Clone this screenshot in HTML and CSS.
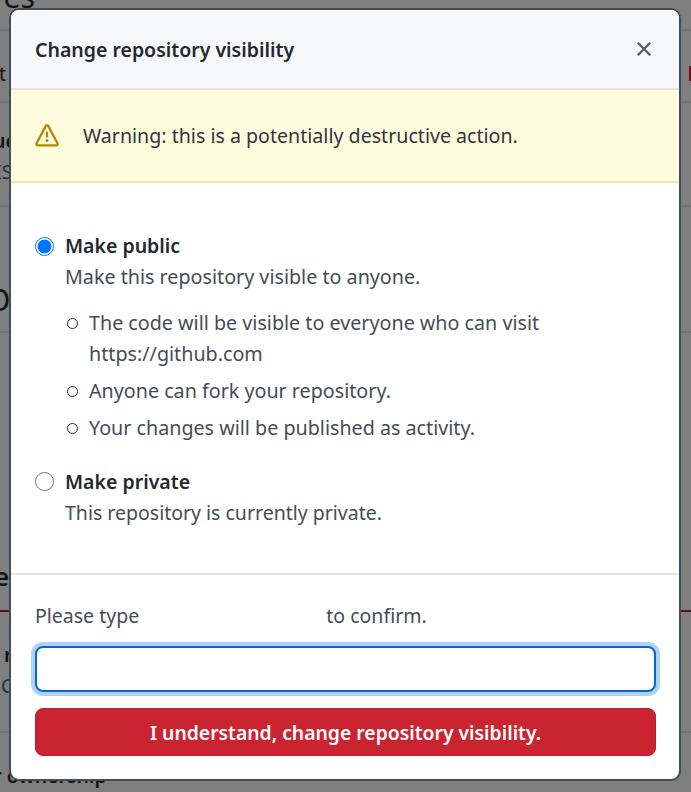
FILE: index.html
```html
<!DOCTYPE html>
<html lang="en">
<head>
    <meta charset="UTF-8">
    <meta name="viewport" content="width=device-width, initial-scale=1.0">
    <title>Change repository visibility</title>
    <link rel="stylesheet" href="styles.css">
</head>
<body>
    <!-- Settings page behind the dialog, only the edges show -->
    <div class="page">
        <div class="row row-heading"><span class="page-heading">Features</span></div>
        <div class="row row-a"><span class="row-text">t</span><span class="row-right"><i class="dots">:</i><i class="red-bar"></i></span></div>
        <div class="row row-b"><span class="row-title">uc</span><span class="row-sub">ES</span></div>
        <div class="row row-c"><span class="page-heading big">O</span></div>
        <div class="row row-d"><span class="row-title">e</span></div>
        <div class="row row-f"><span class="row-title">r</span><span class="row-sub">C</span></div>
        <div class="row row-g"><span class="row-title">Transfer ownership</span></div>
    </div>

    <div class="overlay"></div>

    <div class="modal">
        <header class="modal-header">
            <h1>Change repository visibility</h1>
            <button class="close-btn" aria-label="Close">
                <svg width="24" height="24" viewBox="0 0 16 16" fill="currentColor"><path d="M3.72 3.72a.75.75 0 0 1 1.06 0L8 6.94l3.22-3.22a.749.749 0 0 1 1.275.326.749.749 0 0 1-.215.734L9.06 8l3.22 3.22a.749.749 0 0 1-.326 1.275.749.749 0 0 1-.734-.215L8 9.06l-3.22 3.22a.751.751 0 0 1-1.042-.018.751.751 0 0 1-.018-1.042L6.94 8 3.72 4.78a.75.75 0 0 1 0-1.06Z"/></svg>
            </button>
        </header>

        <div class="flash">
            <svg width="24" height="24" viewBox="0 0 16 16" fill="currentColor"><path d="M6.457 1.047c.659-1.234 2.427-1.234 3.086 0l6.082 11.378A1.75 1.75 0 0 1 14.082 15H1.918a1.75 1.75 0 0 1-1.543-2.575Zm1.763.707a.25.25 0 0 0-.44 0L1.698 13.132a.25.25 0 0 0 .22.368h12.164a.25.25 0 0 0 .22-.368Zm.53 3.996v2.5a.75.75 0 0 1-1.5 0v-2.5a.75.75 0 0 1 1.5 0ZM9 11a1 1 0 1 1-2 0 1 1 0 0 1 2 0Z"/></svg>
            <p>Warning: this is a potentially destructive action.</p>
        </div>

        <div class="options">
            <label class="option">
                <input type="radio" name="visibility" checked>
                <div>
                    <strong>Make public</strong>
                    <p>Make this repository visible to anyone.</p>
                    <ul>
                        <li><span>The code will be visible to everyone who can visit https://github.com</span></li>
                        <li><span>Anyone can fork your repository.</span></li>
                        <li><span>Your changes will be published as activity.</span></li>
                    </ul>
                </div>
            </label>
            <label class="option option-private">
                <input type="radio" name="visibility">
                <div>
                    <strong>Make private</strong>
                    <p>This repository is currently private.</p>
                </div>
            </label>
        </div>

        <div class="confirm">
            <p>Please type <span class="repo-name"></span> to confirm.</p>
            <input type="text" class="confirm-input">
            <button class="danger-btn">I understand, change repository visibility.</button>
        </div>
    </div>
</body>
</html>
```

FILE: styles.css
```css
* {
    margin: 0;
    padding: 0;
    box-sizing: border-box;
}

body {
    font-family: 'Noto Sans', 'Open Sans', sans-serif;
    font-size: 19.5px;
    line-height: 31px;
    color: #24292e;
    background: #fff;
    height: 792px;
    overflow: hidden;
    position: relative;
}

.page {
    display: flex;
    flex-direction: column;
}

.row {
    border-bottom: 2px solid #dfe2e5;
    overflow: hidden;
    display: flex;
    flex-direction: column;
    position: relative;
}

.row-heading {
    height: 31px;
}

.row-a {
    height: 72px;
    padding-top: 27px;
}

.row-b {
    height: 104px;
    padding-top: 22px;
}

.row-c {
    height: 126px;
}

.row-d {
    height: 279px;
    padding-top: 228px;
    border-bottom: 2px solid #9a2a33;
}

.row-f {
    height: 121px;
    padding-top: 27px;
}

.row-g {
    border-bottom: 0;
    height: 60px;
    padding-top: 27px;
}

.page-heading {
    font-size: 30px;
    line-height: 40px;
    margin: -23px 0 0 -87px;
    white-space: nowrap;
}

.page-heading.big {
    margin: 73px 0 0 -13px;
}

.row-text {
    margin-left: -1px;
    color: #24292e;
}

.row-title {
    font-weight: 600;
    margin-left: -7px;
    white-space: nowrap;
}

.row-sub {
    color: #586069;
    margin-left: -9px;
}

.row-d .row-title {
    font-size: 26px;
    margin-left: -6px;
}

.row-f .row-title {
    margin-left: 4px;
}

.row-f .row-sub {
    margin-left: 1px;
}

.row-g .row-title {
    margin-left: -77px;
}

.row-right {
    position: absolute;
    right: 0;
    top: 27px;
    display: flex;
    align-items: center;
    gap: 7px;
}

.dots {
    font-style: normal;
    font-weight: 600;
}

.red-bar {
    width: 2px;
    height: 15px;
    background: #cb2431;
}

.overlay {
    position: absolute;
    inset: 0;
    background: rgba(0, 0, 0, 0.5);
}

.modal {
    position: absolute;
    left: 9px;
    top: 8px;
    width: 672px;
    height: 773px;
    display: flex;
    flex-direction: column;
    background: #fff;
    border: 2px solid #444d56;
    border-radius: 10px;
    overflow: hidden;
}

.modal-header {
    height: 80px;
    display: flex;
    justify-content: space-between;
    align-items: center;
    padding: 0 23px 0 24px;
    background: #f6f8fa;
    border-bottom: 2px solid #e1e4e8;
}

.modal-header h1 {
    font-size: 19.5px;
    font-weight: 600;
}

.close-btn {
    display: flex;
    border: none;
    background: none;
    color: #586069;
}

.flash {
    height: 93px;
    display: flex;
    align-items: center;
    gap: 24px;
    padding-left: 24px;
    font-size: 19.63px;
    background: #fffbdd;
    border-bottom: 2px solid #f0e6b0;
    color: #2f363d;
}

.flash svg {
    color: #b08800;
    flex-shrink: 0;
}

.options {
    height: 392px;
    padding: 47px 23px 0 24px;
    border-bottom: 2px solid #e1e4e8;
    color: #444d56;
    font-size: 19.72px;
}

.option {
    display: flex;
    gap: 11px;
}

.option strong {
    display: block;
    font-size: 19.5px;
    font-weight: 600;
    color: #24292e;
}

.option input {
    appearance: none;
    width: 19px;
    height: 19px;
    margin-top: 7px;
    flex-shrink: 0;
    border: 1px solid #767676;
    border-radius: 50%;
    background: #fff;
}

.option input:checked {
    border-color: #0075ff;
    background: radial-gradient(circle, #0075ff 0, #0075ff 6.5px, #fff 7.3px);
}

.option ul {
    margin-top: 15px;
    padding-left: 2px;
    list-style: none;
}

.option li {
    display: flex;
    gap: 11px;
    margin-bottom: 6px;
}

.option li::before {
    content: "";
    width: 9px;
    height: 9px;
    margin-top: 11px;
    flex-shrink: 0;
    border: 1px solid #24292e;
    border-radius: 50%;
}

.option-private {
    margin-top: 17px;
    font-size: 19.5px;
}

.option-private input {
    margin-top: 6px;
}

.confirm {
    flex: 1;
    display: flex;
    flex-direction: column;
    padding: 25px 23px 0 24px;
}

.confirm p {
    color: #444d56;
}

.repo-name {
    display: inline-block;
    width: 177px;
}

.confirm-input {
    height: 46px;
    margin-top: 15px;
    border: 2px solid #0366d6;
    border-radius: 8px;
    outline: none;
    box-shadow: 0 0 0 4px rgba(3, 102, 214, 0.3);
}

.danger-btn {
    height: 48px;
    margin-top: 16px;
    border: 1px solid #b3202c;
    border-radius: 8px;
    background: #cb2431;
    color: #fff;
    font-family: inherit;
    font-size: 19.35px;
    font-weight: 600;
}
```
